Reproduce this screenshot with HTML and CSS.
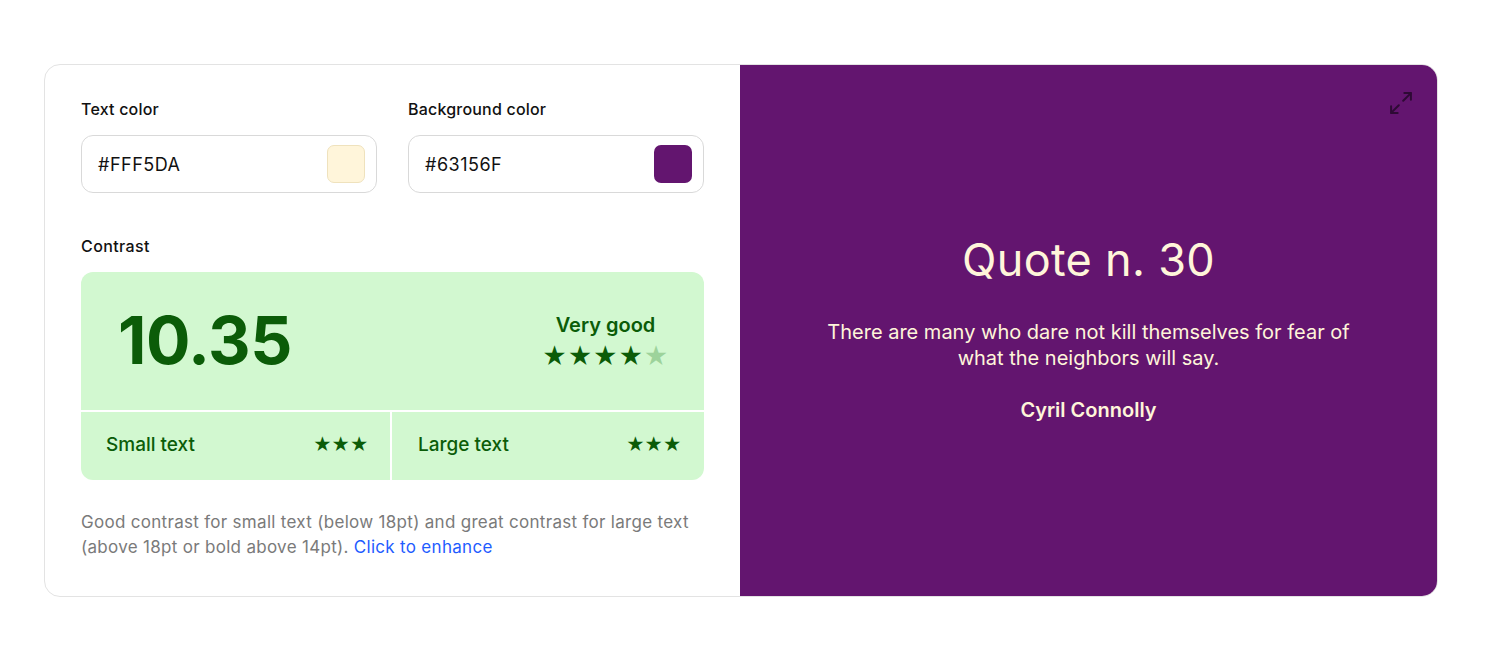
FILE: index.html
```html
<!DOCTYPE html>
<html>
<head>
<meta charset="utf-8">
<link rel="stylesheet" href="styles.css">
</head>
<body>
<div class="page">
  <div class="card">
    <div class="controls">
      <div class="fields">
        <div class="field">
          <div class="label">Text color</div>
          <div class="input">
            <span class="hex">#FFF5DA</span>
            <span class="swatch swatch-light"></span>
          </div>
        </div>
        <div class="field">
          <div class="label">Background color</div>
          <div class="input">
            <span class="hex">#63156F</span>
            <span class="swatch swatch-dark"></span>
          </div>
        </div>
      </div>
      <div class="label contrast-label">Contrast</div>
      <div class="contrast">
        <div class="contrast-top">
          <div class="ratio">10.35</div>
          <div class="rating">
            <div class="rating-text">Very good</div>
            <div class="stars big"><span>★</span><span>★</span><span>★</span><span>★</span><span class="off">★</span></div>
          </div>
        </div>
        <div class="contrast-bottom">
          <div class="cell cell-small"><span>Small text</span><span class="stars small">★★★</span></div>
          <div class="cell cell-large"><span>Large text</span><span class="stars small">★★★</span></div>
        </div>
      </div>
      <p class="note">Good contrast for small text (below 18pt) and great contrast for large text (above 18pt or bold above 14pt). <a class="note-link" href="#">Click to enhance</a></p>
    </div>
    <div class="preview">
      <svg class="expand" width="22" height="22" viewBox="2 2 20 20" fill="none" stroke="currentColor" stroke-width="1.8" stroke-linecap="round" stroke-linejoin="round"><polyline points="15 3 21 3 21 9"/><polyline points="9 21 3 21 3 15"/><line x1="21" y1="3" x2="14" y2="10"/><line x1="3" y1="21" x2="10" y2="14"/></svg>
      <div class="quote">
        <h1 class="quote-title">Quote n. 30</h1>
        <p class="quote-text">There are many who dare not kill themselves for fear of what the neighbors will say.</p>
        <p class="quote-author">Cyril Connolly</p>
      </div>
    </div>
  </div>
</div>
</body>
</html>
```

FILE: styles.css
```css
* { box-sizing: border-box; }
html, body { margin: 0; padding: 0; background: #fff; }
body { font-family: Inter, "Noto Sans", sans-serif; color: #111; }

.page { padding: 64px 63px 0 44px; }

.card {
  display: flex;
  width: 1394px;
  height: 533px;
  border: 1px solid #e3e3e3;
  border-radius: 16px;
  overflow: hidden;
}

.controls {
  width: 695px;
  flex: none;
  padding: 34px 36px 0 36px;
}

.fields { display: flex; gap: 31px; }
.field { flex: 1; }

.label {
  font-size: 16px;
  font-weight: 500;
  line-height: 20px;
  letter-spacing: 0.2px;
  color: #111;
}

.input {
  margin-top: 16px;
  height: 58px;
  border: 1px solid #d9d9d9;
  border-radius: 12px;
  display: flex;
  align-items: center;
  justify-content: space-between;
  padding: 0 11px 0 16px;
}
.hex { font-size: 18px; letter-spacing: 0.5px; color: #111; }
.swatch { width: 38px; height: 38px; border-radius: 7px; }
.swatch-light { background: #FFF5DA; border: 1px solid #efe2bd; }
.swatch-dark { background: #63156F; }

.contrast-label { margin-top: 43px; letter-spacing: 0.4px; }

.contrast {
  margin-top: 16px;
  border-radius: 12px;
  overflow: hidden;
  background: #fff;
  display: flex;
  flex-direction: column;
  gap: 2px;
  color: #0b5c08;
}
.contrast-top {
  height: 138px;
  background: #d2f8d0;
  display: flex;
  align-items: center;
  justify-content: space-between;
  padding: 0 35px 0 37px;
}
.ratio {
  font-size: 66px;
  font-weight: 700;
  letter-spacing: -0.5px;
  line-height: 1;
  padding-bottom: 2px;
}
.rating { display: flex; flex-direction: column; align-items: center; padding-top: 2px; }
.rating-text { font-size: 20px; font-weight: 600; line-height: 24px; }
.stars.big { font-size: 24px; line-height: 28px; margin-top: 6px; letter-spacing: 0.3px; }
.stars .off { color: #9dd39b; }

.contrast-bottom { display: flex; gap: 2px; height: 68px; }
.cell {
  background: #d2f8d0;
  display: flex;
  align-items: center;
  justify-content: space-between;
  font-size: 19px;
  font-weight: 500;
}
.cell-small { flex: 0 0 309px; padding: 0 22px 3px 25px; }
.cell-large { flex: 1; padding: 0 23px 3px 26px; }
.stars.small { font-size: 18px; letter-spacing: -0.5px; }

.note {
  margin: 30px 0 0;
  font-size: 17px;
  line-height: 25px;
  letter-spacing: 0.3px;
  color: #7a7a7a;
}
.note-link { color: #1f5cff; text-decoration: none; }

.preview {
  flex: 1;
  background: #63156F;
  color: #FFF5DA;
  position: relative;
  display: flex;
  align-items: center;
  justify-content: center;
}
.expand {
  position: absolute;
  top: 27px;
  right: 25px;
  color: #2e0a35;
}
.quote { text-align: center; width: 540px; padding-bottom: 6px; }
.quote-title {
  margin: 0;
  font-size: 45px;
  font-weight: 400;
  line-height: 54px;
  letter-spacing: 0.3px;
}
.quote-text {
  margin: 32px 0 0;
  font-size: 20px;
  line-height: 26px;
}
.quote-author {
  margin: 26px 0 0;
  font-size: 20px;
  font-weight: 600;
  line-height: 26px;
}
```
